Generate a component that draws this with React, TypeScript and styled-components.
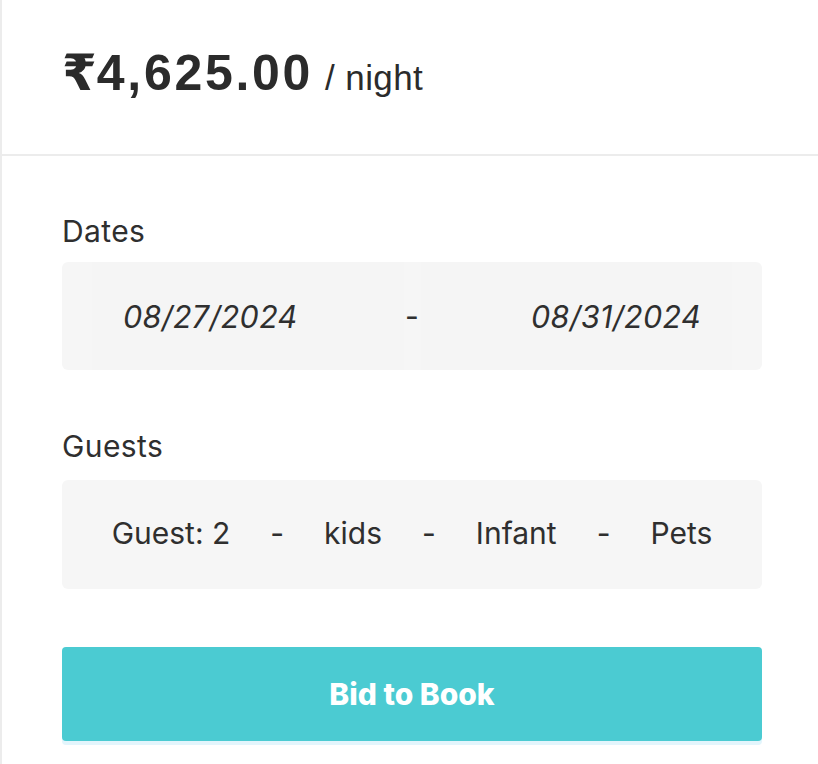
import React from "react";
import styled, { createGlobalStyle } from "styled-components";

const Global = createGlobalStyle`
  html, body { margin: 0; padding: 0; background: #ffffff; }
  body { font-family: Inter, "Noto Sans", sans-serif; color: #2f2f2f; }
  * { box-sizing: border-box; }
`;

const Card = styled.div`
  min-height: 764px;
  border-left: 2px solid #ececec;
  background: #fff;
`;

const Header = styled.div`
  height: 156px;
  padding: 48px 0 0 60px;
  border-bottom: 2px solid #ececec;
  display: flex;
  align-items: baseline;
  gap: 12px;
`;

const Price = styled.span`
  font-family: "Liberation Sans", Arial, "DejaVu Sans", sans-serif;
  font-weight: 700;
  font-size: 50px;
  letter-spacing: 2.7px;
  line-height: 1;
  color: #2b2b2b;
`;

const Currency = styled.span`
  letter-spacing: 0;
`;

const PerNight = styled.span`
  font-family: "Liberation Sans", Arial, sans-serif;
  font-size: 35px;
  letter-spacing: 0.4px;
  line-height: 1;
  color: #2b2b2b;
`;

const Body = styled.div`
  padding: 57px 56px 0 60px;
  display: flex;
  flex-direction: column;
  gap: 58px;
`;

const Field = styled.div`
  display: flex;
  flex-direction: column;
`;

const Label = styled.div<{ $gap: number }>`
  font-size: 30px;
  letter-spacing: 0.4px;
  line-height: 36px;
  color: #2f2f2f;
  margin-bottom: ${(p) => p.$gap}px;
`;

const Box = styled.div`
  height: 108px;
  background: #f6f6f6;
  border-radius: 6px;
`;

const DateRow = styled(Box)`
  display: grid;
  grid-template-columns: 1fr 17px 1fr;
  align-items: stretch;
  padding: 0 30px;
`;

const DateInput = styled.div<{ $align: "left" | "right" }>`
  display: flex;
  align-items: center;
  justify-content: ${(p) => (p.$align === "left" ? "flex-start" : "flex-end")};
  padding: 0 31px;
  background: #f5f5f5;
  font-size: 30.5px;
  font-style: italic;
  color: #2f2f2f;
  letter-spacing: 0.3px;
`;

const Dash = styled.div`
  display: flex;
  align-items: center;
  justify-content: center;
  font-size: 30px;
  color: #2f2f2f;
`;

const GuestRow = styled(Box)`
  height: 109px;
  padding-bottom: 3px;
  display: flex;
  align-items: center;
  justify-content: center;
  gap: 40px;
  font-size: 30px;
  color: #2f2f2f;
`;

const Button = styled.button`
  height: 94px;
  width: 100%;
  border: none;
  border-radius: 4px;
  background: #4bcbd2;
  box-shadow: 0 4px 0 #e3f5fc;
  color: #ffffff;
  font-family: Inter, sans-serif;
  font-weight: 800;
  font-size: 30px;
  cursor: pointer;
`;

export default function App() {
  return (
    <>
      <Global />
      <Card>
        <Header>
          <Price>
            <Currency>₹</Currency>4,625.00
          </Price>
          <PerNight>/ night</PerNight>
        </Header>
        <Body>
          <Field>
            <Label $gap={13}>Dates</Label>
            <DateRow>
              <DateInput $align="left">08/27/2024</DateInput>
              <Dash>-</Dash>
              <DateInput $align="right">08/31/2024</DateInput>
            </DateRow>
          </Field>
          <Field>
            <Label $gap={16}>Guests</Label>
            <GuestRow>
              <span>Guest: 2</span>
              <span>-</span>
              <span>kids</span>
              <span>-</span>
              <span>Infant</span>
              <span>-</span>
              <span>Pets</span>
            </GuestRow>
          </Field>
          <Button>Bid to Book</Button>
        </Body>
      </Card>
    </>
  );
}
